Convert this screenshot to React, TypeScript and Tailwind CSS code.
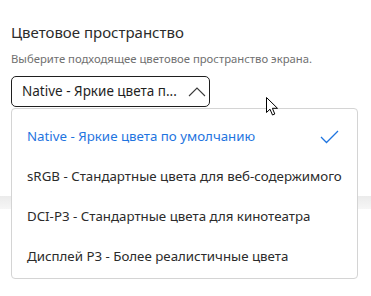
import React from "react";

const items = [
  "Native - Яркие цвета по умолчанию",
  "sRGB - Стандартные цвета для веб-содержимого",
  "DCI-P3 - Стандартные цвета для кинотеатра",
  "Дисплей P3 - Более реалистичные цвета",
];

export default function App() {
  return (
    <div
      className="relative w-[371px] h-[296px] bg-white overflow-hidden"
      style={{ fontFamily: '"Noto Sans", "Open Sans", sans-serif' }}
    >
      <div className="pl-[11px] pt-[22px]">
        <div className="text-[15px] leading-[20px] text-[#2b2b2b]">Цветовое пространство</div>
        <div className="mt-[10px] text-[11.3px] leading-[14px] text-[#707070]">
          Выберите подходящее цветовое пространство экрана.
        </div>
        <div className="mt-[10px] w-[199px] h-[31px] rounded-[5px] border border-[#1f1f1f] flex items-center justify-between pl-[10px] pr-[3px]">
          <span className="text-[13.5px] text-[#1f1f1f] whitespace-nowrap">Native - Яркие цвета п...</span>
          <svg width="18" height="10" viewBox="0 0 18 10" fill="none">
            <path d="M1 9 L9 1 L17 9" stroke="#3a3a3a" strokeWidth="1.1" />
          </svg>
        </div>
      </div>
      <div className="mt-[89px] h-[13px] bg-gradient-to-b from-[#ebebeb] to-[#f6f6f6]" />

      <div className="absolute left-[11px] top-[108px] w-[347px] h-[171px] bg-white border border-[#d4d4d4] rounded-[4px] flex flex-col pt-[8px]">
        {items.map((t, i) => (
          <div key={t} className="h-[40px] flex items-center justify-between pl-[15px] pr-[18px]">
            <span
              className={
                "text-[13.3px] whitespace-nowrap " + (i === 0 ? "text-[#1f75e0]" : "text-[#2b2b2b]")
              }
            >
              {t}
            </span>
            {i === 0 && (
              <svg width="19" height="14" viewBox="0 0 19 14" fill="none">
                <path d="M1 7 L6.5 12.5 L18 1" stroke="#1f75e0" strokeWidth="1.3" />
              </svg>
            )}
          </div>
        ))}
      </div>

      <svg className="absolute left-[266px] top-[97px]" width="13" height="20" viewBox="0 0 13 20">
        <path
          d="M0.5 0.5 L0.5 15.5 L4 12.2 L6.5 18 L8.8 17 L6.4 11.3 L11.5 11.3 Z"
          fill="white"
          stroke="black"
          strokeWidth="1"
          strokeLinejoin="miter"
        />
      </svg>
    </div>
  );
}
